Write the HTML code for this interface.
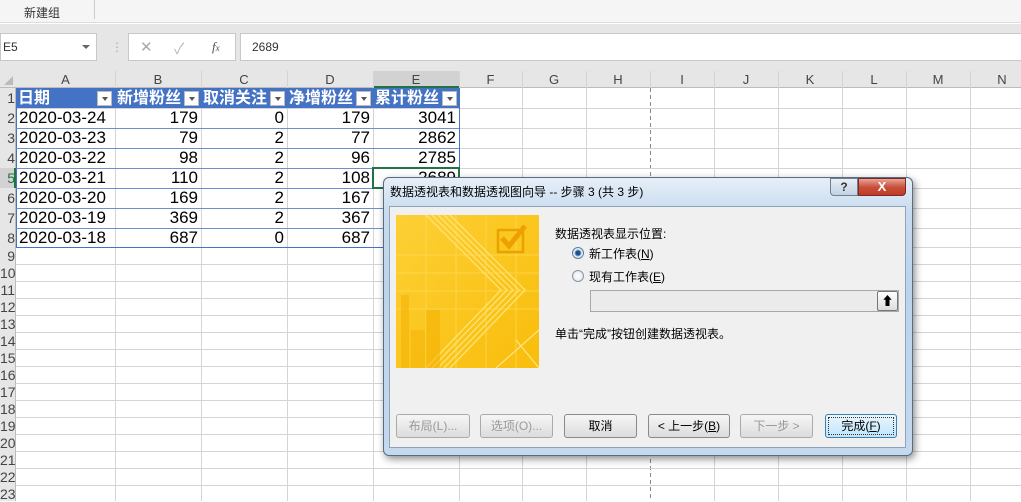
<!DOCTYPE html>
<html><head><meta charset="utf-8"><style>
*{margin:0;padding:0;box-sizing:border-box}
body{width:1021px;height:501px;overflow:hidden;background:#fff;position:relative;font-family:"Liberation Sans","Noto Sans CJK SC",sans-serif}
.a{position:absolute}
.vl{position:absolute;width:1px;background:#d4d4d4}
.hl{position:absolute;height:1px;background:#d4d4d4}
.ch{position:absolute;top:71px;height:17px;font-size:13px;color:#444;text-align:center;line-height:17px}
.rh{position:absolute;left:0;width:16px;font-size:14px;color:#444;text-align:right;padding-right:1px;overflow:hidden}
.c{position:absolute;font-size:17px;color:#000;line-height:20px;height:20px;white-space:nowrap}
.r{text-align:right}
.hd{position:absolute;top:89px;height:19px;color:#fff;font-weight:bold;font-size:16px;line-height:19px;padding-left:2px;white-space:nowrap;overflow:hidden}
.dd{position:absolute;top:91px;width:15px;height:15px;background:#fff;border:1px solid #bbb}
.dd:after{content:"";position:absolute;left:4px;top:5px;border-left:3px solid transparent;border-right:3px solid transparent;border-top:4px solid #555}
.btn{position:absolute;top:414px;height:24px;border:1px solid #8a8a8a;border-radius:3px;background:linear-gradient(#f6f6f6,#dcdcdc);font-size:12px;text-align:center;line-height:22px;color:#000}
.dis{color:#999;border-color:#aaa}
</style></head><body>
<div class="a" style="left:0;top:0;width:1021px;height:23px;background:#f5f5f5;border-bottom:1px solid #dcdcdc"></div>
<div class="a" style="left:24px;top:4px;font-size:12px;color:#333">新建组</div>
<div class="a" style="left:94px;top:0;width:1px;height:19px;background:#ccc"></div>
<div class="a" style="left:0;top:24px;width:1021px;height:47px;background:#e6e6e6"></div>
<div class="a" style="left:0;top:33px;width:97px;height:28px;background:#fff;border:1px solid #c8c8c8"></div>
<div class="a" style="left:3px;top:40px;font-size:12px;color:#333">E5</div>
<div class="a" style="left:82px;top:45px;border-left:4px solid transparent;border-right:4px solid transparent;border-top:4px solid #666"></div>
<div class="a" style="left:111px;top:40px;font-size:12px;color:#aaa">⋮</div>
<div class="a" style="left:128px;top:33px;width:108px;height:28px;background:#fff;border:1px solid #c8c8c8"></div>
<div class="a" style="left:140px;top:38px;font-size:15px;color:#aaa">✕</div>
<div class="a" style="left:174px;top:38px;font-size:15px;color:#bbb">✓</div>
<div class="a" style="left:212px;top:39px;font-size:13px;color:#555;font-style:italic;font-family:'Liberation Serif',serif">f<span style="font-size:9px">x</span></div>
<div class="a" style="left:240px;top:33px;width:790px;height:28px;background:#fff;border:1px solid #c8c8c8"></div>
<div class="a" style="left:252px;top:40px;font-size:12px;color:#333">2689</div>
<div class="a" style="left:0;top:71px;width:1021px;height:17px;background:#e6e6e6;border-bottom:1px solid #bcbcbc"></div>
<div class="a" style="left:0;top:88px;width:16px;height:413px;background:#e6e6e6;border-right:1px solid #bcbcbc"></div>
<div class="a" style="left:373px;top:71px;width:86px;height:17px;background:#d2d2d2;border-bottom:2px solid #217346"></div>
<div class="a" style="left:0;top:168px;width:16px;height:20px;background:#d2d2d2;border-right:2px solid #217346"></div>
<div class="a" style="left:4px;top:76px;border-left:9px solid transparent;border-bottom:9px solid #bbb"></div>
<div class="ch" style="left:16px;width:99px">A</div><div class="ch" style="left:115px;width:86px">B</div><div class="ch" style="left:201px;width:86px">C</div><div class="ch" style="left:287px;width:86px">D</div><div class="ch" style="left:373px;width:86px">E</div><div class="ch" style="left:459px;width:63px">F</div><div class="ch" style="left:522px;width:64px">G</div><div class="ch" style="left:586px;width:64px">H</div><div class="ch" style="left:650px;width:64px">I</div><div class="ch" style="left:714px;width:64px">J</div><div class="ch" style="left:778px;width:64px">K</div><div class="ch" style="left:842px;width:64px">L</div><div class="ch" style="left:906px;width:64px">M</div><div class="ch" style="left:970px;width:64px">N</div>
<div class="vl" style="left:115px;top:71px;height:430px"></div><div class="vl" style="left:201px;top:71px;height:430px"></div><div class="vl" style="left:287px;top:71px;height:430px"></div><div class="vl" style="left:373px;top:71px;height:430px"></div><div class="vl" style="left:459px;top:71px;height:430px"></div><div class="vl" style="left:522px;top:71px;height:430px"></div><div class="vl" style="left:586px;top:71px;height:430px"></div><div class="vl" style="left:714px;top:71px;height:430px"></div><div class="vl" style="left:778px;top:71px;height:430px"></div><div class="vl" style="left:842px;top:71px;height:430px"></div><div class="vl" style="left:906px;top:71px;height:430px"></div><div class="vl" style="left:970px;top:71px;height:430px"></div>
<div class="vl" style="left:650px;top:71px;height:17px"></div>
<div class="a" style="left:650px;top:88px;width:1px;height:413px;background:repeating-linear-gradient(#888 0 4px,transparent 4px 7px)"></div>
<div class="hl" style="left:16px;top:108px;width:1005px"></div><div class="hl" style="left:16px;top:128px;width:1005px"></div><div class="hl" style="left:16px;top:148px;width:1005px"></div><div class="hl" style="left:16px;top:168px;width:1005px"></div><div class="hl" style="left:16px;top:188px;width:1005px"></div><div class="hl" style="left:16px;top:208px;width:1005px"></div><div class="hl" style="left:16px;top:228px;width:1005px"></div><div class="hl" style="left:16px;top:247px;width:1005px"></div>
<div class="hl" style="left:16px;top:264px;width:1005px"></div><div class="hl" style="left:16px;top:281px;width:1005px"></div><div class="hl" style="left:16px;top:298px;width:1005px"></div><div class="hl" style="left:16px;top:315px;width:1005px"></div><div class="hl" style="left:16px;top:332px;width:1005px"></div><div class="hl" style="left:16px;top:349px;width:1005px"></div><div class="hl" style="left:16px;top:366px;width:1005px"></div><div class="hl" style="left:16px;top:383px;width:1005px"></div><div class="hl" style="left:16px;top:400px;width:1005px"></div><div class="hl" style="left:16px;top:417px;width:1005px"></div><div class="hl" style="left:16px;top:434px;width:1005px"></div><div class="hl" style="left:16px;top:451px;width:1005px"></div><div class="hl" style="left:16px;top:468px;width:1005px"></div><div class="hl" style="left:16px;top:485px;width:1005px"></div>
<div class="rh" style="top:89px;line-height:19px">1</div><div class="rh" style="top:109px;line-height:19px">2</div><div class="rh" style="top:129px;line-height:19px">3</div><div class="rh" style="top:149px;line-height:19px">4</div><div class="rh" style="top:169px;line-height:19px;color:#217346">5</div><div class="rh" style="top:189px;line-height:19px">6</div><div class="rh" style="top:209px;line-height:19px">7</div><div class="rh" style="top:229px;line-height:19px">8</div>
<div class="rh" style="top:248px;line-height:16px">9</div><div class="rh" style="top:265px;line-height:16px">10</div><div class="rh" style="top:282px;line-height:16px">11</div><div class="rh" style="top:299px;line-height:16px">12</div><div class="rh" style="top:316px;line-height:16px">13</div><div class="rh" style="top:333px;line-height:16px">14</div><div class="rh" style="top:350px;line-height:16px">15</div><div class="rh" style="top:367px;line-height:16px">16</div><div class="rh" style="top:384px;line-height:16px">17</div><div class="rh" style="top:401px;line-height:16px">18</div><div class="rh" style="top:418px;line-height:16px">19</div><div class="rh" style="top:435px;line-height:16px">20</div><div class="rh" style="top:452px;line-height:16px">21</div><div class="rh" style="top:469px;line-height:16px">22</div><div class="rh" style="top:486px;line-height:16px">23</div>
<div class="a" style="left:16px;top:88px;width:443px;height:20px;background:#4472c4"></div>
<div class="hd" style="left:16px;width:99px">日期</div><div class="hd" style="left:115px;width:86px">新增粉丝</div><div class="hd" style="left:201px;width:86px">取消关注</div><div class="hd" style="left:287px;width:86px">净增粉丝</div><div class="hd" style="left:373px;width:86px">累计粉丝</div>
<div class="dd" style="left:97px"></div><div class="dd" style="left:184px"></div><div class="dd" style="left:270px"></div><div class="dd" style="left:356px"></div><div class="dd" style="left:442px"></div>
<div class="a" style="left:16px;top:88px;width:444px;height:160px;border:1px solid #4472c4;border-top:none"></div>
<div class="a" style="left:16px;top:128px;width:443px;height:1px;background:#6d8fcf"></div><div class="a" style="left:16px;top:148px;width:443px;height:1px;background:#6d8fcf"></div><div class="a" style="left:16px;top:168px;width:443px;height:1px;background:#6d8fcf"></div><div class="a" style="left:16px;top:188px;width:443px;height:1px;background:#6d8fcf"></div><div class="a" style="left:16px;top:208px;width:443px;height:1px;background:#6d8fcf"></div><div class="a" style="left:16px;top:228px;width:443px;height:1px;background:#6d8fcf"></div>
<div class="c" style="left:19px;top:108px">2020-03-24</div><div class="c r" style="left:115px;width:83px;top:108px">179</div><div class="c r" style="left:201px;width:83px;top:108px">0</div><div class="c r" style="left:287px;width:83px;top:108px">179</div><div class="c r" style="left:373px;width:83px;top:108px">3041</div>
<div class="c" style="left:19px;top:128px">2020-03-23</div><div class="c r" style="left:115px;width:83px;top:128px">79</div><div class="c r" style="left:201px;width:83px;top:128px">2</div><div class="c r" style="left:287px;width:83px;top:128px">77</div><div class="c r" style="left:373px;width:83px;top:128px">2862</div>
<div class="c" style="left:19px;top:148px">2020-03-22</div><div class="c r" style="left:115px;width:83px;top:148px">98</div><div class="c r" style="left:201px;width:83px;top:148px">2</div><div class="c r" style="left:287px;width:83px;top:148px">96</div><div class="c r" style="left:373px;width:83px;top:148px">2785</div>
<div class="c" style="left:19px;top:168px">2020-03-21</div><div class="c r" style="left:115px;width:83px;top:168px">110</div><div class="c r" style="left:201px;width:83px;top:168px">2</div><div class="c r" style="left:287px;width:83px;top:168px">108</div><div class="c r" style="left:373px;width:83px;top:168px">2689</div>
<div class="c" style="left:19px;top:188px">2020-03-20</div><div class="c r" style="left:115px;width:83px;top:188px">169</div><div class="c r" style="left:201px;width:83px;top:188px">2</div><div class="c r" style="left:287px;width:83px;top:188px">167</div>
<div class="c" style="left:19px;top:208px">2020-03-19</div><div class="c r" style="left:115px;width:83px;top:208px">369</div><div class="c r" style="left:201px;width:83px;top:208px">2</div><div class="c r" style="left:287px;width:83px;top:208px">367</div>
<div class="c" style="left:19px;top:228px">2020-03-18</div><div class="c r" style="left:115px;width:83px;top:228px">687</div><div class="c r" style="left:201px;width:83px;top:228px">0</div><div class="c r" style="left:287px;width:83px;top:228px">687</div>
<div class="a" style="left:372px;top:167px;width:88px;height:22px;border:2px solid #217346"></div>
<div class="a" style="left:383px;top:177px;width:530px;height:279px;border-radius:6px;border:1px solid #5a6a80;background:linear-gradient(180deg,#e6eff8,#c9dcef 12%,#bcd3ea 40%,#c4d9ee);box-shadow:2px 3px 8px rgba(0,0,0,.45)"></div>
<div class="a" style="left:390px;top:183px;font-size:12px;color:#000;white-space:nowrap">数据透视表和数据透视图向导 -- 步骤 3 (共 3 步)</div>
<div class="a" style="left:830px;top:178px;width:28px;height:18px;border:1px solid #6f7f92;border-radius:0 0 0 4px;background:linear-gradient(#e8eef6,#c2d2e4);text-align:center;font-size:12px;font-weight:bold;color:#333;line-height:16px">?</div>
<div class="a" style="left:858px;top:178px;width:48px;height:18px;border:1px solid #7a2a22;border-radius:0 0 4px 0;background:linear-gradient(#e9a597,#c9503c 50%,#c13a26);text-align:center;font-size:13px;font-weight:bold;color:#fff;line-height:16px">X</div>
<div class="a" style="left:389px;top:206px;width:517px;height:242px;background:#f0f0f0;border:1px solid #8da2bb"></div>
<svg class="a" style="left:396px;top:215px" width="143" height="153" viewBox="0 0 143 153">
<defs><linearGradient id="g" x1="0" y1="0" x2="1" y2="1"><stop offset="0" stop-color="#ffd84a" stop-opacity=".6"/><stop offset="1" stop-color="#f5b800" stop-opacity=".5"/></linearGradient></defs>
<rect width="143" height="153" fill="#fcc419"/>
<rect width="143" height="153" fill="url(#g)"/>
<g stroke="#ffe066" stroke-width="1" opacity=".6" fill="none"><path d="M0 40H143M0 58H143M0 76H143M0 94H143M30 0V153M60 0V153M90 0V153M120 0V153"/></g>
<g stroke="#ffe580" stroke-width="1.3" fill="none" opacity=".9"><path d="M30 0L105 75L30 153M36 0L111 75L36 153M42 0L117 75L42 153M48 0L123 75L48 153M54 0L129 75L54 153"/></g>
<rect x="5" y="80" width="8" height="73" fill="#f3ae00" opacity=".5"/><rect x="30" y="95" width="14" height="58" fill="#f3ae00" opacity=".5"/><rect x="15" y="115" width="14" height="38" fill="#f3ae00" opacity=".4"/>
<rect x="102" y="15" width="25" height="22" fill="none" stroke="#e9a200" stroke-width="2.5"/>
<path d="M106 23l7 8 16-20" fill="none" stroke="#eea000" stroke-width="5"/>
<path d="M100 153L143 115M120 125L143 153" stroke="#ffe58a" stroke-width="1.2" fill="none"/>
</svg>
<div class="a" style="left:555px;top:225px;font-size:12px">数据透视表显示位置:</div>
<div class="a" style="left:572px;top:247px;width:12px;height:12px;border-radius:50%;border:1px solid #5a7b9a;background:radial-gradient(#1d4f88 30%,#6fa0cf 40%,#e8eef4 55%)"></div>
<div class="a" style="left:589px;top:245px;font-size:12px">新工作表(<u>N</u>)</div>
<div class="a" style="left:572px;top:270px;width:12px;height:12px;border-radius:50%;border:1px solid #8a96a3;background:radial-gradient(#fff,#dde2e8)"></div>
<div class="a" style="left:589px;top:268px;font-size:12px">现有工作表(<u>E</u>)</div>
<div class="a" style="left:590px;top:290px;width:309px;height:22px;border:1px solid #a8a8a8;background:#ebebeb"></div>
<div class="a" style="left:877px;top:291px;width:21px;height:20px;border:1px solid #777;border-radius:2px;background:linear-gradient(#fff,#ddd);text-align:center;font-size:12px;font-weight:bold;line-height:18px">⬆</div>
<div class="a" style="left:555px;top:325px;font-size:12px">单击“完成”按钮创建数据透视表。</div>
<div class="btn dis" style="left:396px;width:74px">布局(L)...</div>
<div class="btn dis" style="left:480px;width:73px">选项(O)...</div>
<div class="btn" style="left:564px;width:73px">取消</div>
<div class="btn" style="left:648px;width:82px">&lt; 上一步(<u>B</u>)</div>
<div class="btn dis" style="left:740px;width:73px">下一步 &gt;</div>
<div class="btn" style="left:825px;width:72px;border-color:#3c7fb1;background:linear-gradient(#eaf6fd,#bee6fd)"><span style="display:block;margin:2px;border:1px dotted #333;line-height:16px">完成(<u>F</u>)</span></div>
</body></html>
